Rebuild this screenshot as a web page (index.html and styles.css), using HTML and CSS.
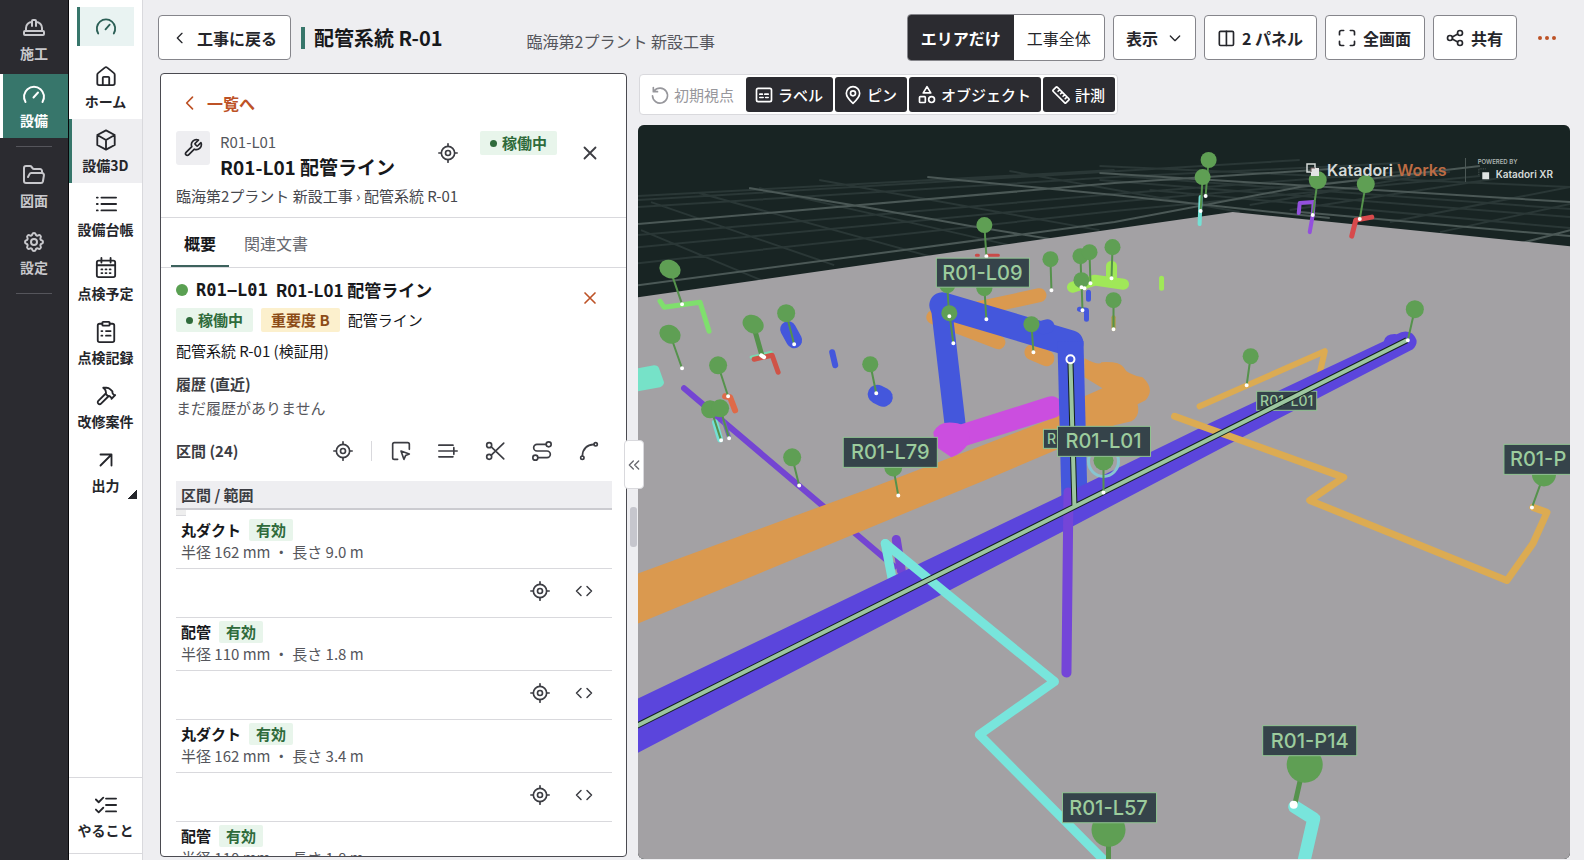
FILE: index.html
```html
<!DOCTYPE html>
<html lang="ja">
<head>
<meta charset="utf-8">
<meta name="viewport" content="width=device-width, initial-scale=1">
<title>配管系統 R-01</title>
<link rel="stylesheet" href="styles.css">
</head>
<body>
<svg class="sprite" aria-hidden="true">
  <symbol id="i-gauge" viewBox="0 0 24 24"><path d="M3.500 19a10 10 0 1 1 17 0M11.500 14.500L16 9.500"/></symbol>
  <symbol id="i-target" viewBox="0 0 24 24"><circle cx="12" cy="12" r="8"/><circle cx="12" cy="12" r="3"/><path d="M12 1v3M12 20v3M1 12h3M20 12h3"/></symbol>
  <symbol id="i-x" viewBox="0 0 24 24"><path d="M18 6L6 18M6 6l12 12"/></symbol>
  <symbol id="i-left" viewBox="0 0 24 24"><path d="M15 5l-7 7 7 7"/></symbol>
  <symbol id="i-code" viewBox="0 0 24 24"><path d="M8 6l-6 6 6 6M16 6l6 6-6 6"/></symbol>
</svg>

<nav class="rail" aria-label="メイン">
  <a class="rail-item" href="#"><svg class="icon lg" viewBox="0 0 24 24"><path d="M10 10V5a1 1 0 0 1 1-1h2a1 1 0 0 1 1 1v5M14 6a6 6 0 0 1 6 6v3M4 15v-3a6 6 0 0 1 6-6"/><rect x="2" y="15" width="20" height="4" rx="1"/></svg>施工</a>
  <a class="rail-item active" href="#"><svg class="icon lg"><use href="#i-gauge"/></svg>設備</a>
  <hr>
  <a class="rail-item" href="#"><svg class="icon lg" viewBox="0 0 24 24"><path d="M6 14l1.500-2.900A2 2 0 0 1 9.200 10H20a2 2 0 0 1 1.900 2.500l-1 6a2 2 0 0 1-2 1.500H4a2 2 0 0 1-2-2V5a2 2 0 0 1 2-2h3.900a2 2 0 0 1 1.700.9l.8 1.200a2 2 0 0 0 1.700.9H18a2 2 0 0 1 2 2v2"/></svg>図面</a>
  <a class="rail-item" href="#"><svg class="icon lg" viewBox="0 0 24 24"><path d="M10.325 4.317c.426-1.756 2.924-1.756 3.350 0a1.724 1.724 0 0 0 2.573 1.066c1.543-.94 3.310.826 2.370 2.370a1.724 1.724 0 0 0 1.065 2.572c1.756.426 1.756 2.924 0 3.350a1.724 1.724 0 0 0-1.066 2.573c.94 1.543-.826 3.310-2.370 2.370a1.724 1.724 0 0 0-2.572 1.065c-.426 1.756-2.924 1.756-3.350 0a1.724 1.724 0 0 0-2.573-1.066c-1.543.94-3.310-.826-2.370-2.370a1.724 1.724 0 0 0-1.065-2.572c-1.756-.426-1.756-2.924 0-3.350a1.724 1.724 0 0 0 1.066-2.573c-.94-1.543.826-3.310 2.370-2.370 1 .608 2.296.07 2.572-1.065z"/><circle cx="12" cy="12" r="3"/></svg>設定</a>
  <hr>
</nav>

<nav class="side" aria-label="設備">
  <a class="side-home" href="#" aria-label="設備"><svg class="icon md"><use href="#i-gauge"/></svg></a>
  <a class="side-item" href="#"><svg class="icon lg" viewBox="0 0 24 24"><path d="M2.500 10.500a2 2 0 0 1 .8-1.600l7.400-6a2 2 0 0 1 2.600 0l7.400 6a2 2 0 0 1 .8 1.600V20a2 2 0 0 1-2 2h-15a2 2 0 0 1-2-2zM8.500 22v-8a1 1 0 0 1 1-1h5a1 1 0 0 1 1 1v8"/></svg>ホーム</a>
  <a class="side-item active" href="#"><svg class="icon lg" viewBox="0 0 24 24"><path d="M12 1.500l9.500 5v11l-9.500 5-9.500-5v-11zM2.500 6.500l9.500 5.500 9.500-5.500M12 12v10.500"/></svg>設備3D</a>
  <a class="side-item" href="#"><svg class="icon lg" viewBox="0 0 24 24"><path d="M7 5h16M7 12h16M7 19h16M2 5h1M2 12h1M2 19h1"/></svg>設備台帳</a>
  <a class="side-item" href="#"><svg class="icon lg" viewBox="0 0 24 24"><rect x="2" y="4" width="20" height="18" rx="2"/><path d="M7 1v5M17 1v5M2 9h20M7 13.500h1M11.500 13.500h1M16 13.500h1M7 17.500h1M11.500 17.500h1M16 17.500h1"/></svg>点検予定</a>
  <a class="side-item" href="#"><svg class="icon lg" viewBox="0 0 24 24"><path d="M8 3H5a2 2 0 0 0-2 2v16a2 2 0 0 0 2 2h14a2 2 0 0 0 2-2V5a2 2 0 0 0-2-2h-3"/><rect x="8" y="1" width="8" height="4" rx="1"/><path d="M7 11h1M7 16h1M12 11h5M12 16h5"/></svg>点検記録</a>
  <a class="side-item" href="#"><svg class="icon lg" viewBox="0 0 24 24"><path d="M15 12l-8.400 8.400a1 1 0 1 1-3-3L12 9M18 15l4-4M21.500 11.500l-1.900-1.900A2 2 0 0 1 19 8.200V7l-2.300-2.300a6 6 0 0 0-4.200-1.700H9l.9.800A6.200 6.200 0 0 1 12 8.400V10l2 2h1.200a2 2 0 0 1 1.400.6l1.900 1.900"/></svg>改修案件</a>
  <a class="side-item more" href="#"><svg class="icon lg" viewBox="0 0 24 24"><path d="M6 18L18 6M6 6h12v12"/></svg>出力</a>
  <div class="side-foot"><a class="side-item" href="#"><svg class="icon lg" viewBox="0 0 24 24"><path d="M12 5h11M12 12h11M12 19h11M1 6l3 3 5-5M1 17l3 3 5-5"/></svg>やること</a></div>
</nav>

<main class="main">
  <header class="topbar">
    <button class="btn back" type="button"><svg class="icon sm"><use href="#i-left"/></svg>工事に戻る</button>
    <h1>配管系統 R-01</h1>
    <p class="project">臨海第2プラント 新設工事</p>
    <div class="tools">
      <div class="segment"><button type="button" class="on" aria-pressed="true">エリアだけ</button><button type="button" aria-pressed="false">工事全体</button></div>
      <button class="btn drop" type="button">表示<svg class="icon sm" viewBox="0 0 24 24"><path d="M5 9l7 7 7-7"/></svg></button>
      <button class="btn" type="button"><svg class="icon" viewBox="0 0 24 24"><rect x="4" y="4" width="17" height="17" rx="1.500"/><path d="M12.500 4v17"/></svg>2 パネル</button>
      <button class="btn" type="button"><svg class="icon" viewBox="0 0 24 24"><path d="M3 8V5a2 2 0 0 1 2-2h3M16 3h3a2 2 0 0 1 2 2v3M21 16v3a2 2 0 0 1-2 2h-3M8 21H5a2 2 0 0 1-2-2v-3"/></svg>全画面</button>
      <button class="btn" type="button"><svg class="icon" viewBox="0 0 24 24"><circle cx="6" cy="12" r="3"/><circle cx="18" cy="6" r="3"/><circle cx="18" cy="18" r="3"/><path d="M8.700 10.700l6.600-3.400M8.700 13.300l6.600 3.400"/></svg>共有</button>
      <button class="dots" type="button" aria-label="その他"><svg class="icon lg" viewBox="0 0 24 24"><circle cx="5" cy="12" r="1"/><circle cx="12" cy="12" r="1"/><circle cx="19" cy="12" r="1"/></svg></button>
    </div>
  </header>

  <div class="work">
    <section class="panel">
      <div class="panel-head">
        <a class="to-list" href="#"><svg class="icon"><use href="#i-left"/></svg>一覧へ</a>
        <div class="ident">
          <span class="tool-box"><svg class="icon" viewBox="0 0 24 24"><path d="M14.700 6.300a1 1 0 0 0 0 1.400l1.600 1.600a1 1 0 0 0 1.400 0l3.800-3.800a6 6 0 0 1-7.900 7.900l-6.900 6.900a2.100 2.100 0 0 1-3-3l6.900-6.900a6 6 0 0 1 7.900-7.900z"/></svg></span>
          <div class="names"><span class="code">R01-L01</span><h2>R01-L01 配管ライン</h2></div>
          <button class="ghost" type="button" aria-label="位置へ移動"><svg class="icon"><use href="#i-target"/></svg></button>
          <span class="badge ok top"><i></i>稼働中</span>
          <button class="ghost" type="button" aria-label="閉じる"><svg class="icon md"><use href="#i-x"/></svg></button>
        </div>
        <p class="crumb">臨海第2プラント 新設工事 › 配管系統 R-01</p>
      </div>
      <div class="tabs" role="tablist"><button type="button" role="tab" class="on" aria-selected="true">概要</button><button type="button" role="tab" aria-selected="false">関連文書</button></div>
      <div class="detail">
        <div class="detail-top">
          <div>
            <h3><i class="dot"></i><code>R01−L01</code><span>R01-L01 配管ライン</span></h3>
            <div class="badges"><span class="badge ok"><i></i>稼働中</span><span class="badge warn">重要度 B</span><span>配管ライン</span></div>
          </div>
          <button class="ghost orange" type="button" aria-label="選択を解除"><svg class="icon"><use href="#i-x"/></svg></button>
        </div>
        <p class="system">配管系統 R-01 (検証用)</p>
        <h4>履歴 (直近)</h4>
        <p class="muted">まだ履歴がありません</p>
        <div class="section-bar">
          <h4>区間 (24)</h4>
          <button class="ghost" type="button" aria-label="位置"><svg class="icon"><use href="#i-target"/></svg></button>
          <span class="rule"></span>
          <button class="ghost" type="button" aria-label="選択"><svg class="icon" viewBox="0 0 24 24"><path d="M8 22H4a2 2 0 0 1-2-2V4a2 2 0 0 1 2-2h16a2 2 0 0 1 2 2v6M12 12l10 3.500-4.500 2-2 4.500z"/></svg></button>
          <button class="ghost" type="button" aria-label="追加"><svg class="icon" viewBox="0 0 24 24"><path d="M1 5h17M1 12h22M1 19h17M19 8v8"/></svg></button>
          <button class="ghost" type="button" aria-label="分割"><svg class="icon" viewBox="0 0 24 24"><circle cx="5" cy="5" r="3"/><circle cx="5" cy="19" r="3"/><path d="M7.500 7l15 14.500M7.500 17l15-14.500"/></svg></button>
          <button class="ghost" type="button" aria-label="経路"><svg class="icon" viewBox="0 0 24 24"><circle cx="20" cy="4" r="3"/><circle cx="4" cy="20" r="3"/><path d="M17 4H6a4 4 0 0 0 0 8h12a4 4 0 0 1 0 8H7"/></svg></button>
          <button class="ghost" type="button" aria-label="曲線"><svg class="icon" viewBox="0 0 24 24"><circle cx="20" cy="4" r="2"/><circle cx="4" cy="20" r="2"/><path d="M4 18C4.500 9 9 4.500 18 4"/></svg></button>
        </div>
        <table>
          <thead><tr><th scope="col">区間 / 範囲</th></tr></thead>
          <tbody>
            <tr class="info"><td><b>丸ダクト</b><span class="state">有効</span><p>半径 162 mm ・ 長さ 9.0 m</p></td></tr>
            <tr class="acts"><td><div><button class="ghost" type="button" aria-label="位置"><svg class="icon"><use href="#i-target"/></svg></button><button class="ghost" type="button" aria-label="詳細"><svg class="icon code-icon"><use href="#i-code"/></svg></button></div></td></tr>
            <tr class="info"><td><b>配管</b><span class="state">有効</span><p>半径 110 mm ・ 長さ 1.8 m</p></td></tr>
            <tr class="acts"><td><div><button class="ghost" type="button" aria-label="位置"><svg class="icon"><use href="#i-target"/></svg></button><button class="ghost" type="button" aria-label="詳細"><svg class="icon code-icon"><use href="#i-code"/></svg></button></div></td></tr>
            <tr class="info"><td><b>丸ダクト</b><span class="state">有効</span><p>半径 162 mm ・ 長さ 3.4 m</p></td></tr>
            <tr class="acts"><td><div><button class="ghost" type="button" aria-label="位置"><svg class="icon"><use href="#i-target"/></svg></button><button class="ghost" type="button" aria-label="詳細"><svg class="icon code-icon"><use href="#i-code"/></svg></button></div></td></tr>
            <tr class="info"><td><b>配管</b><span class="state">有効</span><p>半径 110 mm ・ 長さ 1.8 m</p></td></tr>
          </tbody>
        </table>
      </div>
    </section>

    <div class="gutter"><span class="thumb"></span><button class="collapse" type="button" aria-label="パネルを閉じる"><svg class="icon" viewBox="0 0 24 24"><path d="M11 6l-6 6 6 6M19 6l-6 6 6 6"/></svg></button></div>

    <section class="view">
      <div class="view-tools">
        <button type="button" disabled><svg class="icon" viewBox="0 0 24 24"><path d="M5 7a9 9 0 1 1-2 6M4 3v5h5"/></svg>初期視点</button>
        <button type="button"><svg class="icon" viewBox="0 0 24 24"><rect x="3" y="4" width="18" height="16" rx="2"/><path d="M7 11h3M13 11h4M7 15h4M14 15h3"/></svg>ラベル</button>
        <button type="button"><svg class="icon" viewBox="0 0 24 24"><path d="M20 10c0 5-8 12-8 12s-8-7-8-12a8 8 0 0 1 16 0z"/><circle cx="12" cy="10" r="3"/></svg>ピン</button>
        <button type="button"><svg class="icon" viewBox="0 0 24 24"><path d="M12 2l4.500 7.500h-9z"/><rect x="3" y="14" width="7" height="7" rx="1"/><circle cx="17.500" cy="17.500" r="3.500"/></svg>オブジェクト</button>
        <button type="button"><svg class="icon" viewBox="0 0 24 24"><path d="M7.500 2.500l14 14a1 1 0 0 1 0 1.400l-3.600 3.600a1 1 0 0 1-1.400 0l-14-14a1 1 0 0 1 0-1.400l3.600-3.600a1 1 0 0 1 1.400 0zM10.500 5.500l-2 2M13.500 8.500l-2 2M16.500 11.500l-2 2M19 14.500l-2 2"/></svg>計測</button>
      </div>
      <div class="stage">
        <svg class="scene" viewBox="639 125 931 734" preserveAspectRatio="xMinYMin slice" role="img" aria-label="配管の3D表示">
          <rect x="639" y="125" width="931" height="734" fill="#182423"/>
          <g class="grid">
            <path d="M639 196L1115 170M639 200L1300 160M639 207L1115 177L1400 163M639 235L1115 194L1400 172M639 247L1115 202L1450 172M639 263L1115 211L1480 176M652 202L835 265M642 230L762 280M700 193L930 256M760 188L1010 245M820 180L1100 230M1010 171L1240 212M1100 166L1570 187M1100 180L1570 217M1120 176L1570 209M1150 190L1570 228M1290 210L1500 178M1390 222L1570 187M1440 232L1570 204M1250 205L1420 176"/>
            <path class="major" d="M639 224L1115 183L1330 169M639 285L1115 222L1300 187L1480 166M750 188L865 207L971 226L1052 239M928 177L1115 195L1330 218M1100 173L1570 202M1300 212L1570 236M1510 246L1570 230"/>
          </g>
          <path fill="#a3a1a4" d="M639 297L1233 212L1570 246V859H639z"/>
          <g class="pipe">
            <path stroke="#7fdf6d" stroke-width="5" d="M661 301L665 307L701 302L710 331"/>
            <path fill="#76e2c8" d="M639 368L655 365Q659 365 660 368L665 382Q665 385 661 387L639 391z"/>
            <path stroke="#78d8b0" stroke-width="3" d="M752 357L772 352L776 364"/>
            <path stroke="#cf5347" stroke-width="5" d="M755 359L773 355L779 372"/>
            <path stroke="#df6a48" stroke-width="6" d="M726 396L731 397L736 410"/>
            <path stroke="#7445d2" stroke-width="6" d="M685 388L895 566"/>
            <path stroke="#7445d2" stroke-width="9" d="M897 539L902 570"/>
            <path stroke="#74e0d4" stroke-width="6" d="M716 422L721 439"/>
            <path stroke="#7465ba" stroke-width="4" d="M725 422L730 437"/>
            <path stroke="#4457dc" stroke-width="16" d="M789 329L795 340"/>
            <path stroke="#4457dc" stroke-width="6" d="M833 352L836 365"/>
            <path stroke="#4457dc" stroke-width="19" d="M878 394L884 397"/>
            <path stroke="#c94b48" stroke-width="3" d="M977 255H979M987 255H999"/>
            <path stroke="#a0e858" stroke-width="11" d="M1073 287L1095 280L1124 284M1112 266V279"/>
            <path stroke="#a0e858" stroke-width="5" d="M1162 278V288"/>
            <path stroke="#4457dc" stroke-width="5" d="M1089 292V299M1080 309L1087 310V319"/>
            <path stroke="#af9c35" stroke-width="4" d="M1114 317V329"/>
            <path stroke="#74e0d4" stroke-width="4" d="M1201 197L1200 224"/>
            <path stroke="#9350dd" stroke-width="4" d="M1299 213L1300 203L1314 202L1313 215L1310 232"/>
            <path stroke="#d84a4c" stroke-width="5" d="M1372 217L1356 220L1352 236"/>
            <path stroke="#da994f" stroke-width="14" d="M975 309L1040 295M934 317L999 342"/>
            <path stroke="#da994f" stroke-width="16" d="M1033 352L1047 358"/>
            <path fill="#da994f" d="M639 573L865 490L1056 417L1085 396L1103 388L1085 377V358Q1100 366 1102 362Q1120 361 1124 367Q1127 374 1143 377Q1156 389 1146 400L1138 404Q1141 416 1132 421L1115 425L985 480L639 623z"/>
            <path stroke="#4457dc" stroke-width="21" d="M942 306L957 435"/>
            <path stroke="#4457dc" stroke-width="26" stroke-linejoin="round" d="M943 305L1071 343"/>
            <path stroke="#4457dc" stroke-width="14" d="M1044 327L1048 326"/>
            <path stroke="#cb4edf" stroke-width="22" d="M954 438L1052 407"/>
            <path fill="#cb4edf" d="M934 432Q940 419 958 423Q972 426 970 442Q962 454 952 457L936 446z"/>
            <path stroke="#4457dc" stroke-width="26" class="butt" d="M1071 341L1075 500"/>
            <path stroke="#dcab52" stroke-width="6" d="M1200 406L1325 351L1320 373"/>
            <path stroke="#78e5dc" stroke-width="9" d="M893 579L886 543"/>
            <path fill="#5b45dc" d="M639 698L1058 497L1210 423L1384 341Q1386 333 1397 334Q1405 329 1412 333Q1421 341 1413 349L1233 442L1075 525L639 752z"/>
            <path stroke="#7445d8" stroke-width="10" d="M1069 492L1067 672"/>
            <path stroke="#dcab52" stroke-width="7" d="M1175 416L1344 477L1310 500L1507 580L1533 543L1547 512L1533 507"/>
            <path stroke="#78e5dc" stroke-width="9" d="M886 543L1055 681L980 734L1112 867"/>
            <path stroke="#78e5dc" stroke-width="13" d="M1295 806L1314 818L1303 866"/>
          </g>
          <g class="tag small"><rect x="1257" y="391" width="60" height="19"/><text x="1287" y="406">R01-L01</text><rect x="1044" y="429" width="60" height="19"/><text x="1052" y="444">R</text></g>
          <path class="axis-edge" d="M630 729L1407 340M1071 362L1075 507"/>
          <path class="axis" d="M630 729L1407 340M1071 362L1075 507"/>
          <circle cx="1071" cy="359" r="4" fill="none" stroke="#fff" stroke-width="2"/>
          <circle cx="1104" cy="461" r="15" fill="none" stroke="#87c5d0" stroke-width="3"/>
          <g class="stems">
            <path d="M671 269L683 304M671 334L683 368M719 365L729 396M787 313L795 344M871 364L877 393M712 409L722 440M721 408L730 438M793 457L800 485M985 225L987 256M985 288L987 319M948 288L950 316M950 313L954 343M1032 324L1034 352M1051 259L1052 290M1081 256L1082 287M1090 252L1091 283M1082 280L1083 310M1113 247L1112 278M1114 300V329M1209 160L1206 196M1203 177L1201 211M1318 180L1313 215M1366 184L1360 219M1415 309L1408 340M1251 356L1247 385M1544 474L1532 507M894 467L899 495M1104 460V492"/>
            <path class="thick" d="M754 324L763 356M1304 764L1295 804M1109 829V862"/>
          </g>
          <g class="heads">
            <ellipse cx="671" cy="269" rx="11" ry="9" transform="rotate(25 671 269)"/><ellipse cx="671" cy="334" rx="11" ry="9" transform="rotate(25 671 334)"/><circle cx="719" cy="365" r="9"/><ellipse cx="754" cy="324" rx="11" ry="9" transform="rotate(30 754 324)"/><circle cx="787" cy="313" r="9"/><circle cx="871" cy="364" r="8"/><circle cx="711" cy="409" r="9"/><circle cx="721" cy="408" r="9"/><circle cx="793" cy="457" r="9"/><circle cx="985" cy="225" r="8"/><circle cx="985" cy="288" r="8"/><circle cx="948" cy="285" r="8"/><circle cx="950" cy="313" r="8"/><circle cx="1032" cy="324" r="8"/><circle cx="1051" cy="259" r="8"/><circle cx="1081" cy="256" r="8"/><circle cx="1090" cy="252" r="8"/><circle cx="1082" cy="280" r="8"/><circle cx="1113" cy="247" r="8"/><circle cx="1114" cy="300" r="8"/><circle cx="1209" cy="160" r="8"/><circle cx="1203" cy="177" r="8"/><circle cx="1318" cy="180" r="9"/><circle cx="1366" cy="184" r="9"/><circle cx="1415" cy="309" r="9"/><circle cx="1251" cy="356" r="8"/><circle cx="1544" cy="474" r="12"/><circle cx="894" cy="467" r="9"/><circle cx="1104" cy="460" r="10"/><circle cx="1305" cy="764" r="18"/><circle cx="1109" cy="829" r="17"/>
          </g>
          <path class="tips" d="M683 304h0M683 368h0M729 396h0M762 355l3 2M795 344h0M877 393h0M722 440h0M730 438h0M800 485h0M987 256h0M987 319h0M950 316h0M954 343h0M1034 352h0M1052 290h0M1082 287h0M1085 288h0M1091 283h0M1083 310h0M1112 278h0M1114 329h0M1206 196h0M1201 211h0M1313 215h0M1360 219h0M1408 340h0M1247 385h0M1532 507h0M899 495h0M1104 492h0"/>
          <circle cx="1294" cy="804" r="4" fill="#fff"/>
          <g class="tag">
            <rect x="937" y="258" width="93" height="29"/><text x="983" y="280">R01-L09</text>
            <rect x="844" y="437" width="94" height="30"/><text x="891" y="459">R01-L79</text>
            <rect x="1058" y="426" width="93" height="30"/><text x="1104" y="448">R01-L01</text>
            <rect x="1504" y="444" width="94" height="30"/><text class="from-left" x="1510" y="466">R01-P</text>
            <rect x="1263" y="725" width="94" height="30"/><text x="1310" y="747">R01-P14</text>
            <rect x="1063" y="792" width="94" height="30"/><text x="1109" y="814">R01-L57</text>
          </g>
        </svg>
        <div class="brand">
          <svg class="mark" viewBox="0 0 14 14"><path fill="none" stroke="#d5dad8" stroke-width="1.500" d="M1 1h8v8H1z"/><path fill="#e4e4e4" d="M5 5h8v8H5z"/><path fill="none" stroke="#6b5555" stroke-width="1" d="M5 9V5h4"/></svg>
          <span class="brand-name">Katadori <em>Works</em></span>
          <div class="powered"><span>POWERED BY</span><strong><svg class="mark" viewBox="0 0 14 14"><path fill="none" stroke="#5c6866" stroke-dasharray="1 1" d="M1 8V1h8"/><path fill="#dfe3e2" d="M5 5h8v8H5z"/></svg>Katadori XR</strong></div>
        </div>
      </div>
    </section>
  </div>
</main>
</body>
</html>
```
FILE: styles.css
```css
:root {
  --ink: #25262b;
  --dark: #2b2b30;
  --teal: #37766b;
  --line: #d9d9dd;
  --bg: #eeeef1;
  --orange: #bd5226;
}
* { box-sizing: border-box; margin: 0; }
body {
  display: flex;
  height: 100vh;
  overflow: hidden;
  background: var(--bg);
  color: var(--ink);
  font: 15px/24px "Noto Sans CJK JP", sans-serif;
}
button { font: inherit; color: inherit; border: 0; background: none; padding: 0; cursor: pointer; }
a { color: inherit; text-decoration: none; }
.sprite { position: absolute; width: 0; height: 0; }
.icon {
  width: 20px; height: 20px; flex: none; display: block;
  fill: none; stroke: currentColor; stroke-width: 2;
  stroke-linecap: round; stroke-linejoin: round;
}
.icon.sm { width: 16px; height: 16px; }
.icon.md { width: 22px; height: 22px; }
.icon.lg { width: 24px; height: 24px; }

/* Main rail */
.rail {
  flex: 0 0 69px;
  display: flex; flex-direction: column; gap: 3px;
  padding-top: 7px;
  background: var(--dark);
  border-right: 1px solid #08080a;
  color: #c8c8cc;
}
.rail-item, .side-item {
  display: flex; flex-direction: column; align-items: center; gap: 3px;
  height: 64px; padding-top: 9px;
  font-size: 14px; line-height: 20px; font-weight: 700;
}
.rail-item.active { background: var(--teal); color: #fff; box-shadow: inset 3px 0 #fff; }
.rail hr { width: 36px; height: 1px; margin: 5px auto 4px; border: 0; background: #55555b; }

/* Section navigation */
.side {
  flex: 0 0 74px;
  display: flex; flex-direction: column;
  padding-top: 7px;
  background: #fff;
  border-right: 1px solid var(--line);
}
.side-home {
  display: grid; place-items: center;
  height: 39px; margin: 0 8px 9px;
  background: #e9f3f2; color: #2b5f56;
  box-shadow: inset 3px 0 var(--teal);
}
.side .icon.lg { width: 22px; height: 22px; }
.side-item { padding-top: 10px; gap: 4px; }
.side-item.active { background: var(--bg); box-shadow: inset 3px 0 var(--teal); }
.more { position: relative; }
.more::after {
  content: ""; position: absolute; right: 5px; bottom: 4px;
  width: 9px; height: 9px;
  background: linear-gradient(135deg, transparent 50%, var(--ink) 50%);
}
.side-foot { margin-top: auto; padding: 6px 0 5px; border: solid var(--line); border-width: 1px 0; margin-bottom: 6px; }

/* Top bar */
.main { flex: 1; min-width: 0; display: flex; flex-direction: column; }
.topbar { display: flex; align-items: center; height: 73px; padding: 2px 15px 0 15px; font-size: 16px; }
.btn {
  display: flex; align-items: center; gap: 6px;
  height: 45px; padding: 0 13px 0 11px;
  background: #fff; border: 1px solid #85858b; border-radius: 4px;
  font-weight: 700; white-space: nowrap;
}
.back { gap: 9px; padding: 0 13px; }
.topbar h1 {
  margin-left: 10px; padding-left: 9px; border-left: 4px solid var(--teal);
  font-size: 20px; line-height: 22px; white-space: nowrap; color: #17181b;
}
.project { margin: 6px 0 0 84px; color: #55565c; white-space: nowrap; }
.tools { display: flex; align-items: center; gap: 8px; margin-left: auto; }
.segment { display: flex; height: 47px; border: 1px solid #85858b; border-radius: 4px; background: #fff; overflow: hidden; }
.segment button { padding: 0 13px; white-space: nowrap; }
.segment .on { background: var(--dark); color: #fff; font-weight: 700; }
.drop { padding: 0 12px; gap: 9px; }
.dots { display: grid; place-items: center; width: 44px; height: 44px; color: var(--orange); }

/* Workspace */
.work { flex: 1; min-height: 0; display: flex; padding: 0 14px 1px 17px; }
.panel {
  flex: 0 0 467px; min-height: 0; overflow: hidden; margin-bottom: 2px;
  background: #fff; border: 1px solid #4a4a50; border-radius: 4px;
}
.panel-head { padding: 17px 14px 9px 15px; border-bottom: 1px solid var(--line); }
.to-list { display: inline-flex; align-items: center; gap: 7px; padding-left: 4px; color: var(--orange); font-size: 16px; font-weight: 700; }
.ident { display: flex; align-items: flex-start; margin-top: 12px; }
.tool-box { display: grid; place-items: center; width: 34px; height: 34px; margin-right: 10px; border-radius: 3px; background: var(--bg); }
.names { flex: 1; }
.code { display: block; color: #55565c; line-height: 22px; }
.names h2 { font-size: 19px; line-height: 28px; color: #17181b; white-space: nowrap; }
.ghost { display: grid; place-items: center; width: 44px; height: 44px; color: #3c3d43; }
.ghost.orange { color: var(--orange); }
.ident .top { margin: 0 11px 0 10px; }
.badge {
  display: inline-flex; align-items: center; gap: 5px;
  height: 24px; padding: 0 10px; border-radius: 2px; font-weight: 700; white-space: nowrap;
}
.badge i { width: 7px; height: 7px; border-radius: 50%; background: currentColor; }
.badge.ok, .state { background: #e8f5eb; color: #2f6b3b; }
.badge.warn { background: #fcf0cd; color: #8c4c17; }
.crumb { margin-top: 3px; color: #47484e; white-space: nowrap; }
.tabs { display: flex; gap: 2px; height: 50px; padding-left: 10px; border-bottom: 1px solid var(--line); font-size: 16px; }
.tabs button { padding: 0 13px; color: #67686f; }
.tabs .on { color: #17181b; font-weight: 700; box-shadow: inset 0 -2px #3d625d; }
.detail { padding: 8px 14px 0 15px; color: #17181b; }
.detail-top { display: flex; justify-content: space-between; align-items: flex-start; }
.detail h3 { display: flex; align-items: center; gap: 8px; font-size: 17px; line-height: 28px; }
.dot { width: 12px; height: 12px; border-radius: 50%; background: #5aa052; }
.detail code { font: 700 17px/26px "DejaVu Sans Mono", monospace; }
.badges { display: flex; align-items: center; gap: 8px; margin-top: 4px; }
.system { margin-top: 7px; }
.detail h4 { margin-top: 9px; font-size: 15px; line-height: 24px; font-weight: 700; color: #3c3d43; }
.muted, td p { color: #55565c; }
.section-bar { display: flex; align-items: center; gap: 3px; height: 44px; margin-top: 9px; padding-right: 1px; }
.detail .section-bar h4 { margin: 0 auto 0 0; }
.section-bar .rule { width: 1px; height: 20px; margin: 0 4px 0 3px; background: var(--line); }
table { width: 100%; border-collapse: collapse; margin-top: 8px; }
th {
  position: relative; height: 28px; padding: 0 5px;
  background: var(--bg); border-bottom: 2px solid #cbcbd0;
  text-align: left; font-weight: 700; line-height: 24px; color: #3c3d43;
}
th::after { content: ""; position: absolute; left: 0; top: 29px; width: 10px; height: 5px; background: #eeeeee; border-bottom: 1px solid var(--line); }
td { padding: 0; border-bottom: 1px solid var(--line); vertical-align: top; }
.info td { height: 53px; padding: 3px 5px 2px; line-height: 22px; white-space: nowrap; }
.info:first-child td { height: 59px; padding-top: 9px; }
.state { display: inline-block; margin-left: 8px; padding: 0 7px; border-radius: 2px; line-height: 22px; font-weight: 700; }
.acts td { height: 49px; }
.acts div { display: flex; justify-content: flex-end; padding-right: 6px; }
.code-icon { width: 18px; height: 18px; }

/* Panel divider */
.gutter { position: relative; flex: 0 0 11px; }
.thumb { position: absolute; left: 3px; top: 434px; width: 7px; height: 40px; border-radius: 3px; background: #c6c6cd; }
.collapse {
  position: absolute; z-index: 2; left: -3px; top: 367px; width: 20px; height: 49px;
  display: grid; place-items: center;
  background: #fff; border: 1px solid var(--line); border-radius: 4px; color: #66676d;
}
.collapse .icon { width: 16px; height: 20px; }

/* 3D view */
.view { flex: 1; min-width: 0; display: flex; flex-direction: column; align-items: flex-start; gap: 10px; padding-top: 1px; }
.view-tools { display: flex; gap: 2px; margin-left: 1px; padding: 2px; background: #fff; border: 1px solid var(--line); border-radius: 4px; }
.view-tools button {
  display: flex; align-items: center; gap: 4px;
  height: 35px; padding: 0 10px 0 8px; border-radius: 3px;
  background: var(--dark); color: #fff; font-weight: 500; white-space: nowrap;
}
.view-tools button:disabled { background: none; color: #97979c; font-weight: 400; }
.stage { position: relative; flex: 1; min-height: 0; width: 100%; border-radius: 6px; overflow: hidden; background: #a3a1a4; }
.scene { display: block; width: 100%; height: 100%; }
.grid path { fill: none; stroke: #2a3736; stroke-width: 2; }
.grid .major { stroke: #4b5856; }
.pipe path { stroke-linecap: round; stroke-linejoin: round; }
.pipe .butt { stroke-linecap: butt; }
.pipe path:not([fill]) { fill: none; }
.axis-edge { fill: none; stroke: #14231f; stroke-width: 6; }
.axis { fill: none; stroke: #9cc69f; stroke-width: 4; }
.stems path { fill: none; stroke: #55924c; stroke-width: 2; }
.stems .thick { stroke-width: 5; }
.heads { fill: #5f9f54; }
.tips { fill: none; stroke: #fff; stroke-width: 4; stroke-linecap: round; }
.tag rect { fill: #35434a; stroke: #91c492; stroke-width: 1; }
.tag text { fill: #9ccc9d; font: 500 20px Inter, sans-serif; text-anchor: middle; }
.tag .from-left { text-anchor: start; }
.tag.small text { font-size: 14px; }
.brand { position: absolute; top: 33px; right: 17px; display: flex; align-items: center; font-family: Inter, sans-serif; color: #d5dad8; }
.mark { width: 14px; height: 14px; flex: none; }
.brand-name { margin-left: 7px; font-size: 16px; line-height: 24px; font-weight: 600; }
.brand-name em { font-style: normal; color: #bd6c44; }
.powered { margin-left: 18px; padding-left: 12px; border-left: 1px solid #4c5856; display: flex; flex-direction: column; }
.powered span { font-size: 6px; line-height: 8px; font-weight: 600; color: #aab2b0; }
.powered strong { display: flex; align-items: center; gap: 6px; font-size: 10px; line-height: 16px; font-weight: 600; }
.powered .mark { width: 12px; height: 12px; }
```
